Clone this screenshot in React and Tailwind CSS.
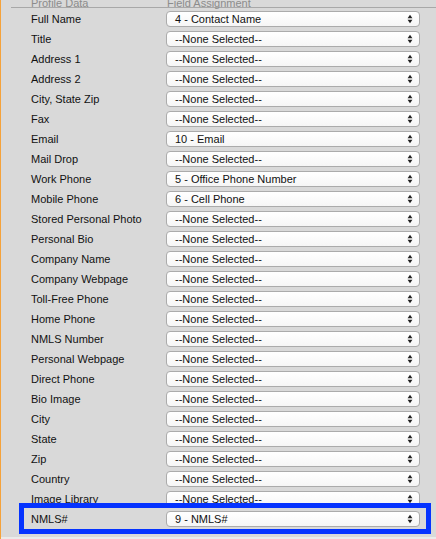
import React from 'react';

const rows = [
  ['Full Name', '4 - Contact Name'],
  ['Title', null],
  ['Address 1', null],
  ['Address 2', null],
  ['City, State Zip', null],
  ['Fax', null],
  ['Email', '10 - Email'],
  ['Mail Drop', null],
  ['Work Phone', '5 - Office Phone Number'],
  ['Mobile Phone', '6 - Cell Phone'],
  ['Stored Personal Photo', null],
  ['Personal Bio', null],
  ['Company Name', null],
  ['Company Webpage', null],
  ['Toll-Free Phone', null],
  ['Home Phone', null],
  ['NMLS Number', null],
  ['Personal Webpage', null],
  ['Direct Phone', null],
  ['Bio Image', null],
  ['City', null],
  ['State', null],
  ['Zip', null],
  ['Country', null],
  ['Image Library', null],
  ['NMLS#', '9 - NMLS#'],
];

const Arrows = () => (
  <svg width="6" height="10" viewBox="0 0 6 10" className="shrink-0">
    <path d="M0.6 4.2 L3 0.8 L5.4 4.2 Z" fill="#222" />
    <path d="M0.6 5.8 L3 9.2 L5.4 5.8 Z" fill="#222" />
  </svg>
);

const FakeSelect = ({ value }) => (
  <div className="w-[254px] h-[16px] flex items-center justify-between pl-[8px] pr-[6px] rounded-[4px] border border-[#ababab] bg-linear-to-b from-white to-[#f6f6f6] text-[11px] leading-none text-[#111]">
    <span>{value || '--None Selected--'}</span>
    <Arrows />
  </div>
);

export default function App() {
  return (
    <div
      className="relative w-[436px] h-[539px] overflow-hidden bg-[#d9d9d9] border-l border-[#f5a23a]"
      style={{ fontFamily: '"Liberation Sans", Arial, sans-serif' }}
    >
      <div className="ml-[10px] h-[10px] border-b border-[#a8a8a8]">
        <div className="flex -mt-[2px] text-[11px] leading-[11px] text-[#8c8c8c]">
          <span className="w-[156px] pl-[20px]">Profile Data</span>
          <span>Field Assignment</span>
        </div>
      </div>

      <div className="flex flex-col pt-[1px]">
        {rows.map(([label, value]) => (
          <div key={label} className="flex items-center h-[20px]">
            <span className="w-[165px] pl-[30px] text-[11px] text-[#111] whitespace-nowrap">{label}</span>
            <FakeSelect value={value} />
          </div>
        ))}
      </div>

      <div className="absolute left-0 right-0 bottom-0 h-[2px] bg-[#ebebeb]" />

      <div className="absolute left-[18px] top-[503px] w-[412px] h-[31px] border-[5px] border-[#0533ff]" />
    </div>
  );
}
